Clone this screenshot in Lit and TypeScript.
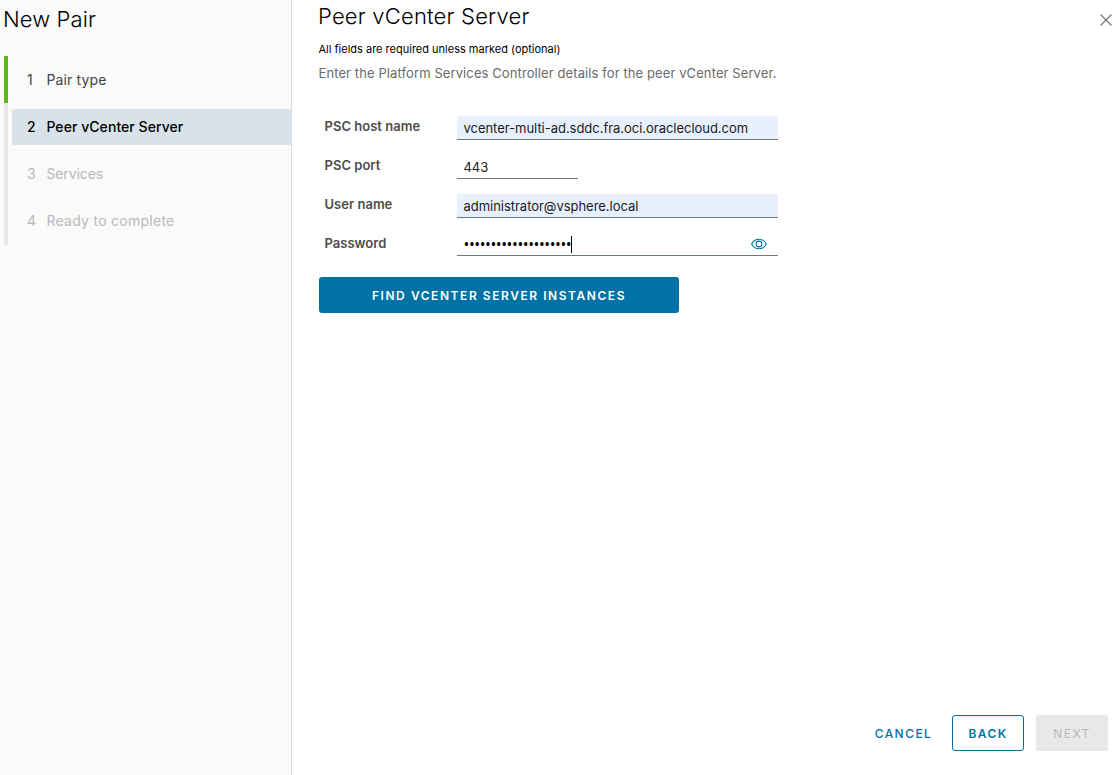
import { LitElement, html, css } from "lit";
import { customElement, property } from "lit/decorators.js";

type StepState = "done" | "current" | "pending";
interface Step { label: string; state: StepState; cls: string }

@customElement("wizard-steps")
class WizardSteps extends LitElement {
  @property({ attribute: false }) steps: Step[] = [];
  static styles = css`
    :host { display: block; }
    .list { display: flex; flex-direction: column; list-style: none; margin: 0; padding: 0 0 0 4px; }
    .step { display: flex; align-items: flex-start; box-sizing: border-box; height: 47px; padding: 6px 0 0 4px; border-left: 4px solid #e8e8e8; color: #b8b8b8; font-size: 14px; line-height: 20px; }
    .step:last-child { height: 48px; }
    .step.done { border-left-color: #60b515; color: #454545; }
    .step.current { color: #000; font-weight: 500; }
    .link { display: flex; align-items: center; flex: 1; height: 36px; padding-left: 15px; border-radius: 3px 0 0 3px; }
    .current .link { background: #d8e3e9; }
    .num { width: 19.4px; }
    .pair { letter-spacing: 0.15px; }
    .peer { letter-spacing: 0.06px; }
    .services { letter-spacing: -0.1px; }
    .ready { letter-spacing: 0.27px; }
  `;
  render() {
    return html`<ol class="list">${this.steps.map((s, i) => html`
      <li class="step ${s.state}"><div class="link"><span class="num">${i + 1}</span><span class=${s.cls}>${s.label}</span></div></li>`)}</ol>`;
  }
}

@customElement("pair-field")
class PairField extends LitElement {
  @property() label = "";
  @property() value = "";
  @property() kind = "";
  static styles = css`
    :host { display: grid; grid-template-columns: 133px auto; justify-content: start; height: 39px; }
    .label { padding-left: 0.5px; font-size: 13px; font-weight: 600; line-height: 20px; color: #4d4d4d; letter-spacing: 0.02px; }
    .input { display: flex; align-items: center; box-sizing: border-box; width: 321px; height: 24px; padding: 0 10px 0 6.5px; border-bottom: 1px solid #6a7a81; font-size: 13px; line-height: 22px; color: #1a1a1a; letter-spacing: -0.03px; }
    .input.autofill { background: #e8f0fe; }
    .input.short { width: 121px; }
    .input.secret { height: 23px; color: #000; }
    .dots { font-family: "Open Sans", sans-serif; font-size: 15.5px; line-height: 20px; letter-spacing: -0.44px; }
    .caret { width: 1px; height: 17px; background: #000; }
    .eye { width: 18px; height: 14px; margin-left: auto; fill: none; stroke: #0072a3; stroke-width: 1.1; }
  `;
  render() {
    return html`<span class="label">${this.label}</span>
      <div class="input ${this.kind}">
        ${this.kind === "secret"
          ? html`<span class="dots">${this.value}</span><span class="caret"></span>
              <svg class="eye" viewBox="0 0 18 14"><path d="M1.6 7C3.3 3.8 5.9 2.2 9 2.2S14.7 3.8 16.4 7C14.7 10.2 12.1 11.8 9 11.8S3.3 10.2 1.6 7Z"/><circle cx="9" cy="7" r="2.9"/></svg>`
          : html`<span>${this.value}</span>`}
      </div>`;
  }
}

@customElement("app-root")
class AppRoot extends LitElement {
  steps: Step[] = [
    { label: "Pair type", state: "done", cls: "pair" },
    { label: "Peer vCenter Server", state: "current", cls: "peer" },
    { label: "Services", state: "pending", cls: "services" },
    { label: "Ready to complete", state: "pending", cls: "ready" },
  ];
  static styles = css`
    :host { display: flex; height: 100vh; overflow: hidden; font-family: Inter, "Open Sans", sans-serif; color: #000; background: #fff; }
    h1, h2, p { margin: 0; }
    .side { box-sizing: border-box; width: 292px; flex: none; background: #fafafa; border-right: 1px solid #dedede; }
    h1 { height: 56px; box-sizing: border-box; padding: 5px 0 0 3px; font-size: 22px; font-weight: 300; line-height: 28px; letter-spacing: 0.1px; }
    .main { display: flex; flex-direction: column; flex: 1; padding: 0 7px 24px 27px; }
    .head { display: flex; justify-content: space-between; height: 39px; }
    h2 { padding-top: 2px; margin-left: -1px; font-size: 22px; font-weight: 300; line-height: 28px; letter-spacing: 0.2px; }
    .close { width: 14px; height: 14px; margin: 13px -5px 0 0; stroke: #737373; stroke-width: 1.1; }
    .note { margin-left: -0.5px; font-size: 11px; line-height: 20px; }
    .intro { margin-left: -0.5px; padding: 4px 0 1px; font-size: 13px; line-height: 20px; color: #6a6a6a; letter-spacing: 0.1px; }
    .form { display: flex; flex-direction: column; padding: 32px 0 0 5px; }
    .btn { display: flex; align-items: center; justify-content: center; box-sizing: border-box; height: 36px; border: 1px solid transparent; border-radius: 3px; font-family: inherit; font-size: 12px; line-height: 20px; letter-spacing: 1.45px; padding: 2px 0 0; margin: 0; background: none; color: #0072a3; }
    .find { width: 360px; margin-top: 5px; background: #0072a3; color: #fff; font-weight: 600; letter-spacing: 1.55px; }
    .foot { display: flex; gap: 12px; justify-content: flex-end; margin-top: auto; }
    .cancel { width: 73px; font-weight: 500; }
    .back { width: 72px; border-color: #0072a3; font-weight: 600; }
    .next { width: 72px; background: #e8e8e8; color: #b8b8b8; font-weight: 400; }
  `;
  render() {
    return html`
      <aside class="side"><h1>New Pair</h1><wizard-steps .steps=${this.steps}></wizard-steps></aside>
      <main class="main">
        <header class="head"><h2>Peer vCenter Server</h2>
          <svg class="close" viewBox="0 0 14 14"><path d="M1.5 1.5 12.5 12.5M12.5 1.5 1.5 12.5"/></svg></header>
        <p class="note">All fields are required unless marked (optional)</p>
        <p class="intro">Enter the Platform Services Controller details for the peer vCenter Server.</p>
        <div class="form">
          <pair-field label="PSC host name" value="vcenter-multi-ad.sddc.fra.oci.oraclecloud.com" kind="autofill"></pair-field>
          <pair-field label="PSC port" value="443" kind="short"></pair-field>
          <pair-field label="User name" value="administrator@vsphere.local" kind="autofill"></pair-field>
          <pair-field label="Password" value="••••••••••••••••••••" kind="secret"></pair-field>
        </div>
        <button class="btn find">FIND VCENTER SERVER INSTANCES</button>
        <footer class="foot"><button class="btn cancel">CANCEL</button><button class="btn back">BACK</button><button class="btn next">NEXT</button></footer>
      </main>`;
  }
}
